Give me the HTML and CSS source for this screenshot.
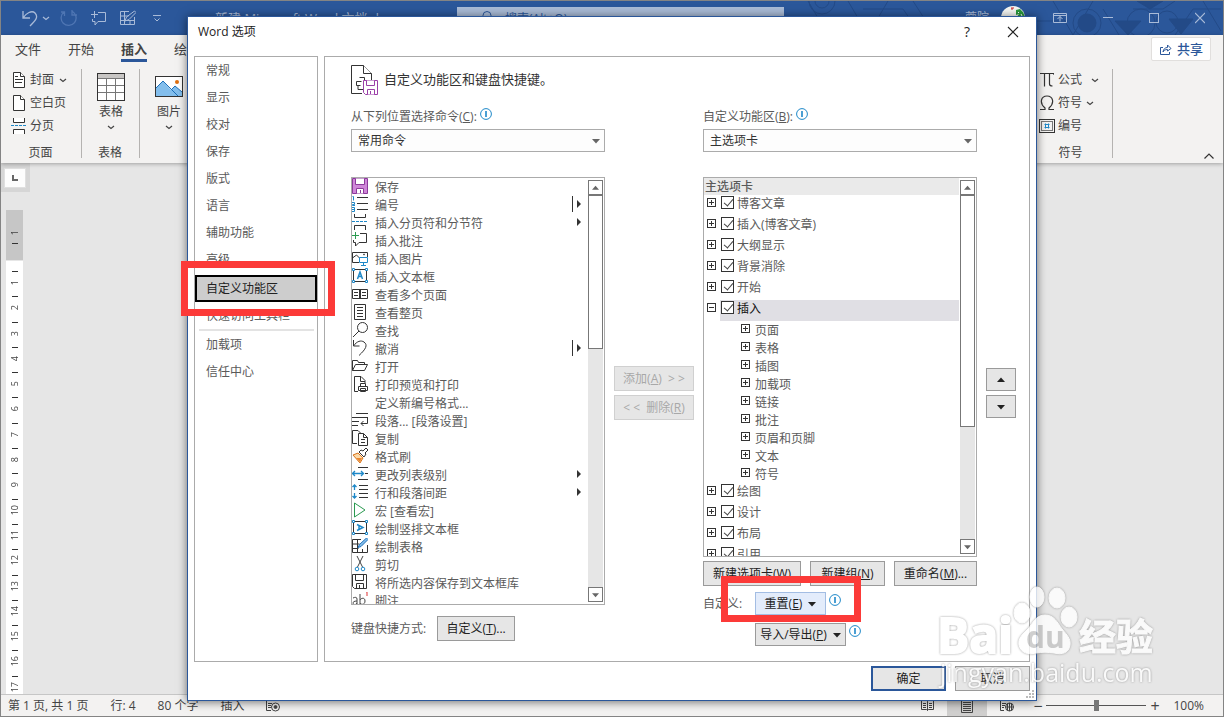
FILE: index.html
```html
<!DOCTYPE html>
<html lang="zh-CN">
<head>
<meta charset="utf-8">
<title>Word 选项</title>
<link rel="stylesheet" href="styles.css">
</head>
<body>
<svg class="defs" aria-hidden="true">
  <symbol id="chev" viewBox="0 0 8 8"><path d="M1 3l3 2.500 3-2.500" fill="none" stroke="currentColor" stroke-width="1.200"/></symbol>
  <symbol id="down" viewBox="0 0 8 8"><path d="M0 2h8L4 6.500z" fill="currentColor"/></symbol>
  <symbol id="up" viewBox="0 0 8 8"><path d="M0 6h8L4 1.500z" fill="currentColor"/></symbol>
  <symbol id="info" viewBox="0 0 12 12"><circle cx="6" cy="6" r="5.400" fill="#fff" stroke="#1e88c8"/><path d="M6 3v6" stroke="#4a9fd4" stroke-width="2"/></symbol>
  <symbol id="more" viewBox="0 0 12 16"><path d="M5 4v8l4-4z" fill="#333"/></symbol>
  <symbol id="split" viewBox="0 0 12 16"><path d="M.5 0v16" stroke="#333"/><path d="M5 4v8l4-4z" fill="#333"/></symbol>
</svg>

<div class="app">
  <header class="titlebar">
    <div class="quick">
      <svg width="16" height="18" viewBox="0 0 16 18" fill="none" stroke="currentColor" stroke-width="1.300"><path d="M1 2v7h7M1 9C4 4 10 1 13 4c4 4 0 8-5 13"/></svg>
      <svg class="tiny" width="8" height="8"><use href="#chev"/></svg>
      <svg class="redo" width="17" height="18" viewBox="0 0 17 18" fill="none" stroke="currentColor" stroke-width="1.300"><path d="M12 1v5h5M12.500 2.500A7.500 7.500 0 1 1 4 3M1 3h3.500v4"/></svg>
      <svg class="qi" width="16" height="16" viewBox="0 0 16 16" fill="none" stroke="currentColor"><path d="M8 2.500h7.500v9H8L5 15v-3.500H2.500V9M4.500 1v7M1 4.500h7"/></svg>
      <svg class="qi" width="17" height="16" viewBox="0 0 17 16" fill="none" stroke="currentColor"><path d="M10 1.500H1.500v13h14V7M1.500 6h8M1.500 10.500h14M5.500 1.500v13M11 10v4"/><path d="M15.500 1L17 2.500 10 9.500 6 11l1.500-4z"/></svg>
      <svg class="qi" width="8" height="8" viewBox="0 0 8 8" fill="none" stroke="currentColor"><path d="M0 1.500h8M1.500 4.500L4 7l2.500-2.500"/></svg>
    </div>
    <span class="doctitle">新建 Microsoft Word 文档.docx</span>
    <div class="search"><svg width="14" height="14" viewBox="0 0 14 14" fill="none" stroke="currentColor"><circle cx="8" cy="5.500" r="4"/><path d="M5 8.500L1 13"/></svg><span>搜索(Alt+Q)</span></div>
    <div class="account">
      <svg class="pattern" width="420" height="34" viewBox="0 0 420 34" fill="none" stroke="#234a87"><circle cx="19" cy="0" r="7"/><circle cx="19" cy="0" r="13"/><path d="M5 0l20 34M45 0l20 34 20-34M60 8h40l18 26M110 0l18 28h60M250 0l20 34 20-34M300 8l16 26M330 8h30l12-8M372 34l18-26h28M400 0l18 30M225 20h40"/><circle cx="338" cy="22" r="14"/><circle cx="207" cy="22" r="10" fill="#234a87"/><circle cx="284" cy="22" r="9" fill="#234a87"/><circle cx="284" cy="22" r="14"/><path d="M312 20h26l-13 14zM366 18h24l-12 15zM334 0h26l-13 8z" fill="#234a87"/><circle cx="364" cy="21" r="11"/></svg>
      <span class="user">一 蓉院</span>
      <svg class="avatar" width="24" height="24" viewBox="0 0 24 24"><circle cx="12" cy="12" r="12" fill="#f4f6f2"/><path d="M10 2h3M10 3h2" stroke="#c22"/><path d="M15 4l4-1 3 3 2 5-9 1 3-4-3 1z" fill="#2a9a3c"/><path d="M17 6l1 1M20 8l1 2" stroke="#fff"/></svg>
      <svg width="14" height="12" viewBox="0 0 14 12" fill="none" stroke="currentColor"><path d="M.5 1.500h13v9H.5zM.5 3.500h13M7 9.500v-5M4.500 7L7 4.500 9.500 7"/></svg>
      <svg width="10" height="12" viewBox="0 0 10 12"><path d="M0 5.500h10" stroke="currentColor"/></svg>
      <svg width="10" height="12" viewBox="0 0 10 12"><rect x=".5" y="1.500" width="9" height="9" fill="none" stroke="currentColor"/></svg>
      <svg width="10" height="12" viewBox="0 0 10 12"><path d="M0 1l10 10M10 1L0 11" stroke="currentColor" stroke-width="1.200"/></svg>
    </div>
  </header>

  <div class="ribbon">
    <nav class="tabs">
      <a href="#">文件</a><a href="#">开始</a><a href="#" class="on">插入</a><a href="#">绘图</a>
      <button class="share"><svg width="13" height="13" viewBox="0 0 13 13" fill="none" stroke="currentColor"><path d="M4 4.500H1.500v7h9V9M4 9c.5-3 2-4.500 4.500-4.500V2l3.500 3.500L8.500 8V6.500C6 6.500 5 7.500 4 9z"/></svg>共享</button>
    </nav>
    <div class="groups">
      <section class="group pages">
        <div class="cmds">
          <button><svg width="12" height="16" viewBox="0 0 12 16" fill="#fff" stroke="#333"><path d="M.5.5h7l4 4v11H.5z"/><path d="M7.500.5v4h4M2 4.500h3M2 7.500h8M2 10.500h7"/></svg>封面<svg width="8" height="8"><use href="#chev"/></svg></button>
          <button><svg width="12" height="16" viewBox="0 0 12 16" fill="#fff" stroke="#333"><path d="M.5.5h7l4 4v11H.5z"/><path d="M7.500.5v4h4"/></svg>空白页</button>
          <button><svg class="wide" width="16" height="16" viewBox="0 0 16 16" fill="#fff" stroke="#333"><path d="M2.500 0v4.500h11V0M2.500 16v-4.500h11V16"/><path d="M0 7.500h16" stroke="#1e88c8" stroke-dasharray="3 1"/></svg>分页</button>
        </div>
        <h2>页面</h2>
      </section>
      <section class="group single">
        <button class="big"><svg width="28" height="28" viewBox="0 0 28 28" fill="#fff" stroke="#333"><rect x=".5" y=".5" width="27" height="27"/><path d="M1 1h26v4H1z" fill="#c8c6c4" stroke="none"/><path d="M1 5.500h26M1 12.500h26M1 19.500h26M9.500 5v22M18.500 5v22" stroke="#777"/></svg>表格<svg width="8" height="8"><use href="#chev"/></svg></button>
        <h2>表格</h2>
      </section>
      <section class="group single open">
        <button class="big"><svg width="28" height="28" viewBox="0 0 28 28"><rect x=".5" y="3.500" width="27" height="20" fill="#fff" stroke="#333"/><path d="M1 15l7-7 8 9 4-4 7 6v4H1z" fill="#83beec"/><path d="M1 15l7-7 15 15M16 17l4-4 7 6" fill="none" stroke="#1e6fb8"/><circle cx="22" cy="9" r="2" fill="#e07010"/></svg>图片<svg width="8" height="8"><use href="#chev"/></svg></button>
      </section>
      <section class="group symbols">
        <div class="cmds">
          <button><svg width="14" height="16" viewBox="0 0 14 16" fill="none" stroke="#333" stroke-width="1.200"><path d="M0 2V1.500h14V3M4.500 2v12.500M9.500 2v10c0 2 1 2 3 2"/></svg>公式<svg class="far" width="8" height="8"><use href="#chev"/></svg></button>
          <button><svg width="14" height="16" viewBox="0 0 14 16" fill="none" stroke="#333" stroke-width="1.200"><path d="M0 14.500h5V13C-1 8 1 1 7 1s8 7 2 12v1.500h5"/></svg>符号<svg width="8" height="8"><use href="#chev"/></svg></button>
          <button><svg class="wide" width="16" height="14" viewBox="0 0 16 14" fill="none" stroke="#333"><rect x=".5" y=".5" width="15" height="13"/><rect x="2.500" y="2.500" width="11" height="9" stroke="#777"/><path d="M6.500 4.500v5M9.500 4.500v5M5.500 5.500h5M5.500 8.500h5" stroke="#1e88c8"/></svg>编号</button>
        </div>
        <h2>符号</h2>
      </section>
      <div class="collapse"><svg width="10" height="6" viewBox="0 0 10 6" fill="none" stroke="#333" stroke-width="1.200"><path d="M.5 5.500L5 1l4.500 4.500"/></svg></div>
    </div>
  </div>

  <main class="doc">
    <div class="corner"><span><svg width="6" height="6" viewBox="0 0 6 6"><path d="M1 0v5h5" fill="none" stroke="#666" stroke-width="2"/></svg></span></div>
    <div class="ruler">
      <div class="margin"><b>1</b><i></i></div>
      <div class="scale">
        <div><i></i><b>1</b></div><div><i></i><b>2</b></div><div><i></i><b>3</b></div><div><i></i><b>4</b></div><div><i></i><b>5</b></div><div><i></i><b>6</b></div><div><i></i><b>7</b></div><div><i></i><b>8</b></div><div><i></i><b>9</b></div><div><i></i><b>10</b></div><div><i></i><b>11</b></div><div><i></i><b>12</b></div><div><i></i><b>13</b></div><div><i></i><b>14</b></div><div><i></i><b>15</b></div><div><i></i><b>16</b></div><div><i></i><b>17</b></div>
      </div>
    </div>
  </main>

  <footer class="status">
    <span>第 1 页, 共 1 页</span><span>行: 4</span><span>80 个字</span><span>插入</span>
    <svg width="15" height="13" viewBox="0 0 15 13" fill="none" stroke="#444"><path d="M5 11.500H.5V1.500h13M2 4.500h4M2 6.500h3M2 8.500h3"/><circle cx="9.500" cy="8" r="4"/><circle cx="9.500" cy="8" r="1.500" fill="#444"/></svg>
    <div class="views">
      <button aria-label="阅读视图"><svg width="13" height="13" viewBox="0 0 13 13" fill="none" stroke="#444"><path d="M.5 1.500h5l1 1 1-1h5v9h-5l-1 1-1-1h-5zM6.500 2.500v9M2 4.500h3M2 6.500h3M2 8.500h3M8 4.500h3M8 6.500h3M8 8.500h3"/></svg></button>
      <button class="cur" aria-label="页面视图"><svg width="12" height="14" viewBox="0 0 12 14" fill="none" stroke="#444"><path d="M.5.5h11v13H.5zM2 3.500h8M2 5.500h8M2 7.500h8M2 9.500h8M2 11.500h8"/></svg></button>
      <button aria-label="Web 版式"><svg width="14" height="13" viewBox="0 0 14 13" fill="none" stroke="#444"><path d="M4 11.500H.5V1.500h11M2 4.500h4M2 6.500h3M2 8.500h2"/><circle cx="9.500" cy="8" r="4"/><path d="M5.500 8h8M9.500 4v8M7.500 4.500v7M11.500 4.500v7"/></svg></button>
    </div>
    <div class="zoom"><button aria-label="缩小">−</button><input type="range" aria-label="缩放" min="0" max="100" value="50"><button aria-label="放大">+</button><span>100%</span></div>
  </footer>

  <div class="dialog" role="dialog" aria-labelledby="dlg">
    <div class="caption"><h1 id="dlg">Word 选项</h1><button aria-label="帮助">?</button><button aria-label="关闭"><svg width="12" height="12" viewBox="0 0 12 12"><path d="M1 1l10 10M11 1L1 11" stroke="#222" stroke-width="1.100"/></svg></button></div>
    <div class="body">
      <nav class="side">
        <a href="#">常规</a><a href="#">显示</a><a href="#">校对</a><a href="#">保存</a><a href="#">版式</a><a href="#">语言</a><a href="#">辅助功能</a><a href="#">高级</a>
        <a href="#" class="sel">自定义功能区<span class="mark"></span></a>
        <a href="#">快速访问工具栏</a>
        <hr>
        <a href="#">加载项</a><a href="#">信任中心</a>
      </nav>
      <section class="pane">
        <div class="head">
          <svg width="28" height="31" viewBox="0 0 28 31" fill="#fff" stroke="#333"><path d="M11 28.500H.5V.5h12l8 8V15"/><path d="M12.500.5v8h8"/><path d="M8.500 12.500h5v4M5.500 16.500h5M5.500 16.500v4h4M7 20.500v4h5" fill="none"/><path d="M12.500 15.500h14v14h-12l-2-2z" stroke="#9b3fa8"/><path d="M15.500 15.500v5h8v-5M16.500 29.500v-5h7v5M19.500 26v3" stroke="#9b3fa8"/></svg>
          <h2>自定义功能区和键盘快捷键。</h2>
        </div>
        <div class="cols">
          <div class="col left">
            <div class="lab"><label for="from">从下列位置选择命令(<u>C</u>):</label><svg width="12" height="12"><use href="#info"/></svg></div>
            <div class="pick"><select id="from"><option>常用命令</option></select><svg width="8" height="8"><use href="#down"/></svg></div>
            <div class="list">
              <ul class="commands">
                <li><svg viewBox="0 0 16 16" fill="#e3b4e8" stroke="#8c3a9c"><path d="M.5.5h15v15H.5z" fill="#cf86d8"/><path d="M3.500.5v6h9v-6M4.500 15.500v-5h7v5M8.500 12v3" fill="#fff"/></svg>保存</li>
                <li><svg viewBox="0 0 16 16" fill="none" stroke="#333"><path d="M5 1.500h11M5 7.500h11M5 13.500h11"/><path d="M.5.5h1v4M0 6.500h2.500v2H.5v1h2.500M0 11.500h2.500v4H0M0 13.500h2" stroke="#1e88c8"/></svg>编号<svg class="fly" viewBox="0 0 12 16"><use href="#split"/></svg></li>
                <li><svg viewBox="0 0 16 16" fill="none" stroke="#333"><path d="M2.500 0v3.500h11V0M2.500 16v-4.500h11V16"/><path d="M0 7.500h16" stroke="#1e88c8" stroke-dasharray="3 1"/></svg>插入分页符和分节符<svg class="fly" viewBox="0 0 12 16"><use href="#more"/></svg></li>
                <li><svg viewBox="0 0 16 16" fill="none" stroke="#333"><path d="M8 1.500h6.500v9H7L3.500 14v-3.500h-2V8"/><path d="M3.500 0v7M0 3.500h7" stroke="#2a9a50"/></svg>插入批注</li>
                <li><svg viewBox="0 0 16 16" fill="none" stroke="#333"><path d="M7 12.500H.5v-10h15V7M.5 8l4-3 3 3"/><circle cx="12" cy="4.500" r=".5"/><path d="M7.500 7.500h8v5h-8zM11.500 12.500v3M9 15.500h5" stroke="#1e88c8"/></svg>插入图片</li>
                <li><svg viewBox="0 0 16 16" fill="none" stroke="#333"><rect x="1.500" y="1.500" width="13" height="12"/><path d="M5.500 11L8 4l2.500 7M6.500 8.500h3" stroke="#1e88c8" stroke-width="1.500"/><path d="M.5.5h2v2h-2zM13.500.5h2v2h-2zM.5 12.500h2v2h-2zM13.500 12.500h2v2h-2z" fill="#fff" stroke="#1e88c8"/></svg>插入文本框</li>
                <li><svg viewBox="0 0 16 16" fill="none" stroke="#333"><path d="M.5 3.500h15v9H.5zM7.500 3v9M8.500 3v9M2 6.500h4M2 9.500h4M10 6.500h4M10 9.500h4"/></svg>查看多个页面</li>
                <li><svg viewBox="0 0 16 16" fill="none" stroke="#333"><path d="M2.500.5h11v15h-11zM5 3.500h6M5 6.500h6M5 9.500h6M5 12.500h6"/></svg>查看整页</li>
                <li><svg viewBox="0 0 16 16" fill="none" stroke="#333"><circle cx="10.500" cy="5.500" r="5"/><path d="M7 9L1 15"/></svg>查找</li>
                <li><svg viewBox="0 0 16 16" fill="none" stroke="#333"><path d="M1.500 0v6h6M1.500 6C5 1 9 0 12 2c4 3 2 7-5 13.500"/></svg>撤消<svg class="fly" viewBox="0 0 12 16"><use href="#split"/></svg></li>
                <li><svg viewBox="0 0 16 16" fill="none" stroke="#333"><path d="M.5 12.500v-10h5l1 2h6v2M.5 12.500l3-6h12l-3 6z"/></svg>打开</li>
                <li><svg viewBox="0 0 16 16" fill="none" stroke="#333"><path d="M6 15.500H2.500V.5H9l4 4V7M8.500.5v5H13M8.500 10v-2.500h5V10M6.500 10.500h9v4h-9zM8.500 12.500h5v3h-5z"/></svg>打印预览和打印</li>
                <li><svg viewBox="0 0 16 16"></svg>定义新编号格式...</li>
                <li><svg viewBox="0 0 16 16" fill="none" stroke="#333"><path d="M4 1.500h12M0 5.500h16M0 9.500h7M0 13.500h6M15.500 6v5.500H9M11.500 9L9 11.500l2.500 2.500"/></svg>段落... [段落设置]</li>
                <li><svg viewBox="0 0 16 16" fill="none" stroke="#333"><path d="M5 13.500H.5V.5H6L8.500 3M6.500 3.500h5l4 4v8h-9zM11.500 3.500v4h4M9 9.500h4M9 12.500h4"/></svg>复制</li>
                <li><svg viewBox="0 0 16 16"><path d="M1 7l5-2 5 5-3 5z" fill="#fbd9a8" stroke="#d9741c"/><path d="M4 10l4 4 2-4" fill="#e98732"/><path d="M7 4l5 5 2-3-1-1 3-3-2-2-3 3-2-1z" fill="#fff" stroke="#333"/></svg>格式刷</li>
                <li><svg viewBox="0 0 16 16" fill="none" stroke="#333"><path d="M6 1.500h10M13 7.500h3M6 13.500h10"/><path d="M.5 7.500h11M3 5L.5 7.500 3 10M9 5l2.500 2.500L9 10" stroke="#1e88c8" stroke-width="1.300"/></svg>更改列表级别<svg class="fly" viewBox="0 0 12 16"><use href="#more"/></svg></li>
                <li><svg viewBox="0 0 16 16" fill="none" stroke="#333"><path d="M7 1.500h9M7 5.500h9M7 9.500h9M7 13.500h9"/><path d="M2.500 1v5M.5 3L2.500 1l2 2M2.500 9v5M.5 12l2 2 2-2" stroke="#1e88c8" stroke-width="1.300"/></svg>行和段落间距<svg class="fly" viewBox="0 0 12 16"><use href="#more"/></svg></li>
                <li><svg viewBox="0 0 16 16" fill="none" stroke="#2a9a50"><path d="M2.500 1v14L13 8z"/></svg>宏 [查看宏]</li>
                <li><svg viewBox="0 0 16 16" fill="none" stroke="#333"><rect x="1.500" y="1.500" width="13" height="12"/><path d="M5 4.500l6 3-6 3M7 6v3" stroke="#1e88c8" stroke-width="1.500"/><path d="M.5.5h2v2h-2zM13.500.5h2v2h-2zM.5 12.500h2v2h-2zM13.500 12.500h2v2h-2z" fill="#fff" stroke="#1e88c8"/></svg>绘制竖排文本框</li>
                <li><svg viewBox="0 0 16 16" fill="none" stroke="#333"><path d="M9 1.500H.5v13h15V7M.5 6h7M.5 10.500h6M5.500 1.500v13M10.500 11v3"/><path d="M14.500 0L16 1.500 9 8.500 6 9.500l1.500-3z" fill="#83beec" stroke="#1e6fb8"/></svg>绘制表格</li>
                <li><svg viewBox="0 0 16 16" fill="none" stroke="#444"><path d="M5 0l5.500 11M11 0L5.500 11"/><circle cx="5" cy="13" r="1.800" stroke="#1e88c8"/><circle cx="11" cy="13" r="1.800" stroke="#1e88c8"/></svg>剪切</li>
                <li><svg viewBox="0 0 16 16" fill="none" stroke="#333"><path d="M.5.5h14v14H2.500l-2-2zM3.500.5v6h8v-6M4.500 14.500v-5h7v5M7.500 11v3"/></svg>将所选内容保存到文本框库</li>
                <li><svg viewBox="0 0 16 16" fill="none" stroke="#444"><path d="M1 6c2-1 4-1 4 1v6M5 9c-3 0-4 1-4 2s2 3 4 0M8 2v11M8 8c1-2 5-3 5 1s-4 4-5 2"/><path d="M14 0l1-.5V4" stroke="#d33"/></svg>脚注</li>
              </ul>
              <div class="scroll s1"><button aria-label="向上"><svg width="7" height="8" viewBox="0 0 8 8"><use href="#up"/></svg></button><div class="thumb"></div><button class="end" aria-label="向下"><svg width="7" height="8" viewBox="0 0 8 8"><use href="#down"/></svg></button></div>
            </div>
            <div class="shortcut"><span>键盘快捷方式:</span><button class="btn">自定义(<u>T</u>)...</button></div>
          </div>
          <div class="col mid"><button class="btn" disabled>添加(<u>A</u>)&nbsp; &gt; &gt;</button><button class="btn" disabled>&lt; &lt; &nbsp;删除(<u>R</u>)</button></div>
          <div class="col right">
            <div class="lab"><label for="tabs">自定义功能区(<u>B</u>):</label><svg width="12" height="12"><use href="#info"/></svg></div>
            <div class="pick"><select id="tabs"><option>主选项卡</option></select><svg width="8" height="8"><use href="#down"/></svg></div>
            <div class="list">
              <div class="treebox">
                <h3>主选项卡</h3>
                <ul class="tree">
                  <li><button class="ex" aria-label="展开"></button><label><input type="checkbox" checked>博客文章</label></li>
                  <li><button class="ex" aria-label="展开"></button><label><input type="checkbox" checked>插入(博客文章)</label></li>
                  <li><button class="ex" aria-label="展开"></button><label><input type="checkbox" checked>大纲显示</label></li>
                  <li><button class="ex" aria-label="展开"></button><label><input type="checkbox" checked>背景消除</label></li>
                  <li><button class="ex" aria-label="展开"></button><label><input type="checkbox" checked>开始</label></li>
                  <li class="chosen"><button class="ex minus" aria-label="折叠"></button><label><input type="checkbox" checked>插入</label></li>
                  <li class="sub"><button class="ex" aria-label="展开"></button>页面</li>
                  <li class="sub"><button class="ex" aria-label="展开"></button>表格</li>
                  <li class="sub"><button class="ex" aria-label="展开"></button>插图</li>
                  <li class="sub"><button class="ex" aria-label="展开"></button>加载项</li>
                  <li class="sub"><button class="ex" aria-label="展开"></button>链接</li>
                  <li class="sub"><button class="ex" aria-label="展开"></button>批注</li>
                  <li class="sub"><button class="ex" aria-label="展开"></button>页眉和页脚</li>
                  <li class="sub"><button class="ex" aria-label="展开"></button>文本</li>
                  <li class="sub"><button class="ex" aria-label="展开"></button>符号</li>
                  <li><button class="ex" aria-label="展开"></button><label><input type="checkbox" checked>绘图</label></li>
                  <li><button class="ex" aria-label="展开"></button><label><input type="checkbox" checked>设计</label></li>
                  <li><button class="ex" aria-label="展开"></button><label><input type="checkbox" checked>布局</label></li>
                  <li><button class="ex" aria-label="展开"></button><label><input type="checkbox" checked>引用</label></li>
                </ul>
              </div>
              <div class="scroll s2"><button aria-label="向上"><svg width="7" height="8" viewBox="0 0 8 8"><use href="#up"/></svg></button><div class="thumb"></div><button class="end" aria-label="向下"><svg width="7" height="8" viewBox="0 0 8 8"><use href="#down"/></svg></button></div>
            </div>
            <div class="trio"><button class="btn">新建选项卡(<u>W</u>)</button><button class="btn">新建组(<u>N</u>)</button><button class="btn">重命名(<u>M</u>)...</button></div>
            <div class="custom">
              <span>自定义:</span>
              <div class="line"><button class="btn hot"><span>重置(<u>E</u>)</span><svg width="8" height="8"><use href="#down"/></svg><span class="mark"></span></button><svg class="i" width="12" height="12"><use href="#info"/></svg></div>
              <div class="line second"><button class="btn"><span>导入/导出(<u>P</u>)</span><svg width="8" height="8"><use href="#down"/></svg></button><svg class="i" width="12" height="12"><use href="#info"/></svg></div>
            </div>
          </div>
          <div class="col move"><button class="btn" aria-label="上移"><svg width="8" height="8"><use href="#up"/></svg></button><button class="btn" aria-label="下移"><svg width="8" height="8"><use href="#down"/></svg></button></div>
        </div>
      </section>
    </div>
    <div class="actions"><button class="btn ok">确定</button><button class="btn">取消</button></div>
    <svg class="grip" width="8" height="8" viewBox="0 0 8 8" fill="#bbb"><path d="M6 0h2v2H6zM3 3h2v2H3zM6 3h2v2H6zM0 6h2v2H0zM3 6h2v2H3zM6 6h2v2H6z"/></svg>
  </div>

  <svg class="watermark" width="224" height="108" viewBox="0 0 224 108">
    <g class="wm">
      <ellipse cx="83" cy="29" rx="8" ry="10"/><ellipse cx="98" cy="13" rx="7" ry="10"/><ellipse cx="118" cy="14" rx="8" ry="10"/><ellipse cx="130" cy="33" rx="8" ry="10"/>
      <path d="M106 31c-9 0-12 8-17 14-6 6-10 9-9 16 2 8 9 10 17 8 7-1 11-1 18 0 8 2 15 0 16-8 1-6-3-10-8-16-5-7-8-14-17-14z"/>
      <text class="logo" x="-2" y="69">Bai</text>
      <text class="cn" x="140" y="67">经验</text>
      <text class="url" x="1" y="98">jingyan.baidu.com</text>
    </g>
    <text class="du" x="87" y="64">du</text>
  </svg>
</div>
</body>
</html>
```
FILE: styles.css
```css
* { box-sizing: border-box; }
body { margin: 0; font: 12px/18px "Open Sans", "Noto Sans CJK SC", sans-serif; color: #444; }
h1, h2, h3, ul { margin: 0; padding: 0; font-size: 12px; font-weight: 400; }
ul { list-style: none; }
a { color: inherit; text-decoration: none; }
button, select, input { font: inherit; color: inherit; margin: 0; }
button { padding: 0; border: 0; background: none; white-space: nowrap; }
svg { flex: none; }
.defs { position: absolute; width: 0; height: 0; }

.app { position: relative; display: flex; flex-direction: column; height: 100vh; min-height: 600px; border: 1px solid #848484; overflow: hidden; background: #e6e6e6; }

/* Title bar */
.titlebar { display: flex; height: 34px; background: #2b579a; color: #a9bbd8; overflow: hidden; }
.quick { display: flex; flex: none; align-items: center; width: 214px; padding-left: 21px; }
.tiny { margin-left: 4px; }
.redo { margin-left: 10px; color: #4f76b3; }
.qi { margin-left: 13px; }
.quick .qi:last-child { margin-left: 17px; }
.doctitle { flex: none; width: 242px; font-size: 13px; line-height: 34px; white-space: nowrap; }
.search { display: flex; flex: 1; gap: 12px; max-width: 327px; height: 24px; margin-top: 6px; padding: 3px 22px; background: #a9bbd6; color: #2b579a; }
.account { position: relative; display: flex; flex: 1; align-items: center; justify-content: flex-end; gap: 36px; padding-right: 18px; }
.account > svg, .account > span { position: relative; }
.account .pattern { position: absolute; top: 0; right: 0; }
.account .user { margin-right: -24px; }
.account .avatar { margin-right: -8px; }

/* Ribbon */
.ribbon { position: relative; background: #f3f2f1; box-shadow: 0 1px 4px rgba(0,0,0,.3); }
.tabs { display: flex; align-items: flex-start; gap: 27px; height: 33px; padding: 4px 12px 0 14px; font-size: 13px; line-height: 20px; }
.tabs .on { font-weight: 700; border-bottom: 3px solid #2b579a; }
.share { display: flex; align-items: center; justify-content: center; gap: 5px; width: 60px; height: 24px; margin: -2px 0 0 auto; border: 1px solid #e1dfdd; border-radius: 2px; background: #fff; color: #2b579a; font-weight: 500; }
.groups { display: flex; height: 95px; }
.group { position: relative; display: flex; flex-direction: column; justify-content: space-between; padding-bottom: 1px; }
.group::after { content: ""; position: absolute; right: 0; top: 1px; bottom: 5px; border-right: 1px solid #b5b3b1; }
.group h2 { text-align: center; }
.cmds button { display: flex; align-items: center; gap: 5px; height: 23px; }
.cmds .wide { margin: 0 -2px; }
.symbols .wide { margin: 0 -1px; }
.pages { width: 81px; padding-left: 12px; }
.pages h2 { padding-right: 14px; }
.single { width: 58px; }
.single h2 { padding-right: 2px; }
.open::after { display: none; }
.big { display: flex; flex-direction: column; align-items: center; gap: 2px; padding-top: 5px; }
.symbols { width: 77px; margin-left: auto; padding-left: 4px; }
.symbols .cmds button { gap: 4px; }
.symbols .far { margin-left: 5px; }
.symbols h2 { padding-right: 12px; }
.collapse { display: flex; align-items: flex-end; justify-content: flex-end; width: 110px; padding: 0 9px 4px 0; }

/* Document area */
.doc { display: flex; flex: 1; flex-direction: column; align-items: flex-start; min-height: 0; }
.corner { padding: 5px 4px 4px 3px; background: #d6d6d6; }
.corner span { display: flex; align-items: center; justify-content: center; width: 22px; height: 20px; background: #fdfdfd; border: 1px solid #e0e0e0; }
.ruler { display: flex; flex: 1; flex-direction: column; width: 17px; min-height: 0; margin: 18px 0 0 5px; background: #fff; overflow: hidden; font-size: 9px; line-height: 9px; }
.ruler i { display: block; width: 6px; height: 1px; margin: 0 auto; background: #333; }
.ruler b { font-weight: 400; writing-mode: vertical-rl; transform: rotate(180deg); }
.margin { display: flex; flex-direction: column; align-items: center; gap: 8px; height: 51px; padding-top: 20px; background: #c6c6c6; border-bottom: 1px solid #e6e6e6; }
.scale { display: flex; flex: 1; flex-direction: column; padding-top: 7px; margin-bottom: -4px; }
.scale div { display: flex; flex: 1; flex-direction: column; align-items: center; padding-top: 3px; min-height: 0; }
.scale b { display: flex; flex: 1; align-items: center; justify-content: center; min-height: 0; }

/* Status bar */
.status { display: flex; align-items: center; height: 22px; padding-left: 7px; background: #f3f2f1; border-top: 1px solid #c6c6c6; white-space: nowrap; }
.status > span { margin-right: 22px; }
.views { display: flex; align-self: stretch; margin-left: auto; }
.views button { display: flex; align-items: center; justify-content: center; width: 40px; }
.views .cur { background: #d0cfce; }
.zoom { display: flex; align-items: center; gap: 4px; padding: 0 19px 0 6px; }
.zoom button { width: 9px; font-size: 16px; }
.zoom span { margin-left: 10px; }
.zoom input { width: 100px; height: 11px; appearance: none; background: linear-gradient(#555, #555) center / 100% 1px no-repeat; }
.zoom input::-webkit-slider-thumb { appearance: none; width: 5px; height: 11px; background: #777; }

/* Options window */
.dialog { position: absolute; inset: 15px 186px; display: flex; flex-direction: column; background: #fff; border: 1px solid #2b579a; box-shadow: 0 1px 9px rgba(0,0,0,.55); color: #5a5a5a; }
.caption { display: flex; align-items: center; height: 39px; padding: 0 17px 9px 10px; color: #222; }
.caption h1 { flex: 1; }
.caption button { display: flex; justify-content: center; width: 12px; margin-left: 34px; font-size: 14px; }
.body { display: flex; flex: 1; gap: 6px; min-height: 0; padding: 0 6px; }
.side { flex: none; width: 124px; border: 1px solid #ababab; }
.side a { display: block; padding-left: 11px; line-height: 27px; }
.side .sel { position: relative; margin-top: 2px; padding-left: 9px; line-height: 23px; border: 2px solid #000; background: #cdcdcd; color: #222; }
.side hr { margin: 0 3px 0 4px; border: 0; border-top: 2px solid #e3e3e3; }
.mark { position: absolute; z-index: 2; border: 7px solid #fc3a38; pointer-events: none; }
.sel .mark { inset: -16px -20px -16px -16px; }
.pane { display: flex; flex: 1; flex-direction: column; min-width: 0; padding: 8px 13px 15px 26px; border: 1px solid #ababab; }
.head { display: flex; align-items: center; gap: 5px; height: 31px; }
.head h2 { font-size: 13px; color: #333; padding-bottom: 4px; }
.cols { display: grid; flex: 1; grid-template-columns: 254fr 80px 274fr 30px; grid-template-rows: minmax(0, 1fr); gap: 9px; min-height: 0; padding-top: 12px; }
.col { display: flex; flex-direction: column; min-width: 0; min-height: 0; }
.left { padding-bottom: 5px; }
.lab { display: flex; align-items: flex-start; height: 21px; }
.lab svg { margin-left: 3px; }
.pick { display: grid; flex: none; height: 23px; }
.pick select, .pick svg { grid-area: 1 / 1; }
.pick select { appearance: none; padding: 0 6px; border: 1px solid #ababab; border-radius: 0; background: #fdfdfd; color: #333; }
.pick svg { align-self: center; justify-self: end; margin-right: 5px; color: #666; pointer-events: none; }
.list { display: flex; flex: 1; min-height: 0; margin-top: 25px; border: 1px solid #ababab; overflow: hidden; }
.commands { flex: 1; min-width: 0; overflow: hidden; }
.commands li { display: flex; height: 18px; white-space: nowrap; line-height: 19px; }
.commands svg { width: 16px; height: 16px; margin-right: 7px; }
.commands .fly { width: 12px; margin: 0 4px 0 auto; }
.scroll { display: flex; flex: none; flex-direction: column; width: 15px; margin: 2px 1px 2px 0; background: #e6e6e6; }
.scroll button { display: flex; flex: none; align-items: center; justify-content: center; height: 15px; border: 1px solid #777; background: #fff; color: #666; }
.scroll .end { margin-top: auto; }
.thumb { border: 1px solid #777; background: #fff; }
.s1 .thumb { height: 36.500%; }
.s2 .thumb { height: 62%; }
.btn { display: flex; align-items: center; justify-content: center; height: 25px; border: 1px solid #9a9a9a; background: #e6e6e6; color: #222; }
.btn:disabled { border-color: #d0d0d0; color: #a8a8a8; }
.shortcut { display: flex; align-items: center; gap: 11px; margin-top: 11px; }
.shortcut .btn { width: 78px; }
.mid { justify-content: center; gap: 4px; padding-top: 32px; }
.move { justify-content: center; gap: 4px; padding-top: 32px; }
.move .btn { height: 23px; }
.treebox { flex: 1; min-width: 0; }
.treebox h3 { height: 17px; margin-right: 1px; padding-left: 1px; line-height: 17px; font-weight: 500; background: #eaeaea; }
.tree li { display: flex; height: 21px; line-height: 17px; margin-right: 1px; }
.tree label { display: flex; flex: 1; margin-left: 4px; padding-left: 1px; }
.tree .chosen label { background: #e0dfe4; color: #111; }
.tree input { position: relative; appearance: none; width: 13px; height: 13px; margin: 1px 3px 0 0; border: 1px solid #333; background: #fff; }
.tree input:checked::after { content: ""; position: absolute; left: 4px; top: 0; width: 4px; height: 8px; border: solid #444; border-width: 0 1px 1px 0; transform: rotate(40deg); }
.tree .sub { height: 18px; line-height: 19px; padding-left: 34px; }
.tree .sub .ex { margin-right: 5px; }
.ex { flex: none; width: 9px; height: 9px; margin: 3px 0 0 3px; border: 1px solid #333; background: linear-gradient(#333, #333) center / 5px 1px no-repeat, linear-gradient(#333, #333) center / 1px 5px no-repeat; }
.ex.minus { background: linear-gradient(#333, #333) center / 5px 1px no-repeat; }
.trio { display: grid; grid-template-columns: 98fr 75fr 83fr; gap: 9px; margin-top: 4px; }
.custom { display: grid; grid-template-columns: 52px 1fr; row-gap: 8px; align-items: center; margin-top: 6px; }
.line { display: flex; gap: 3px; }
.second { grid-column: 2; }
.line .btn { position: relative; gap: 6px; width: 71px; height: 23px; }
.second .btn { width: 91px; }
.line .i { margin-top: 2px; }
.btn.hot { background: #e3ecfb; border-color: #a3bde3; }
.hot .mark { inset: -17px -36px -8px -35px; }
.actions { display: flex; justify-content: flex-end; gap: 9px; height: 38px; padding: 4px 6px 0; }
.actions .btn { width: 75px; }
.actions .ok { border: 2px solid #2b579a; }
.grip { position: absolute; right: 2px; bottom: 2px; }

/* Logo stamp over the lower right corner */
.watermark { position: absolute; right: 60px; bottom: 24px; overflow: visible; pointer-events: none; opacity: .8; }
.wm { fill: #fff; stroke: #fff; stroke-width: 1; filter: drop-shadow(0 0 1px #888); }
.watermark text { font-family: "Open Sans", "Noto Sans CJK SC", sans-serif; }
.watermark .logo { font-size: 48px; font-weight: 700; stroke-width: 2; }
.watermark .cn { font-size: 37px; font-weight: 700; }
.watermark .url { font-size: 25px; stroke-width: 0; }
.watermark .du { font-size: 30px; font-weight: 700; fill: #c4c4c4; }
```
